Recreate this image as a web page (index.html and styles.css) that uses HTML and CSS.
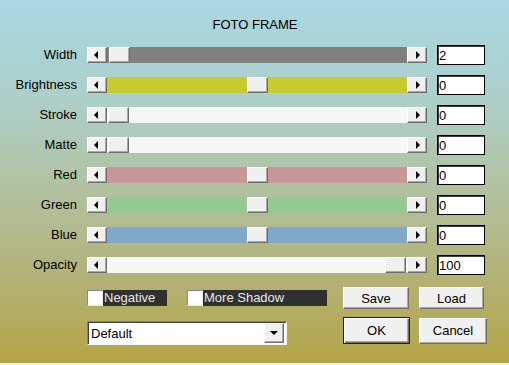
FILE: index.html
```html
<!DOCTYPE html>
<html lang="en">
<head>
    <meta charset="UTF-8">
    <title>Foto Frame</title>
    <link rel="stylesheet" href="styles.css">
</head>
<body>
    <div class="dialog">
        <h1 class="title">FOTO FRAME</h1>

        <div class="rows">
            <span class="label">Width</span>
            <div class="scroll">
                <span class="arrow arrow-left"></span>
                <div class="track track-gray"><span class="thumb" style="margin-left: 2px"></span></div>
                <span class="arrow arrow-right"></span>
            </div>
            <input class="value" type="text" value="2">

            <span class="label">Brightness</span>
            <div class="scroll">
                <span class="arrow arrow-left"></span>
                <div class="track track-yellow"><span class="thumb" style="margin-left: 140px"></span></div>
                <span class="arrow arrow-right"></span>
            </div>
            <input class="value" type="text" value="0">

            <span class="label">Stroke</span>
            <div class="scroll">
                <span class="arrow arrow-left"></span>
                <div class="track track-light"><span class="thumb" style="margin-left: 1px"></span></div>
                <span class="arrow arrow-right"></span>
            </div>
            <input class="value" type="text" value="0">

            <span class="label">Matte</span>
            <div class="scroll">
                <span class="arrow arrow-left"></span>
                <div class="track track-light"><span class="thumb" style="margin-left: 1px"></span></div>
                <span class="arrow arrow-right"></span>
            </div>
            <input class="value" type="text" value="0">

            <span class="label">Red</span>
            <div class="scroll">
                <span class="arrow arrow-left"></span>
                <div class="track track-red"><span class="thumb" style="margin-left: 140px"></span></div>
                <span class="arrow arrow-right"></span>
            </div>
            <input class="value" type="text" value="0">

            <span class="label">Green</span>
            <div class="scroll">
                <span class="arrow arrow-left"></span>
                <div class="track track-green"><span class="thumb" style="margin-left: 140px"></span></div>
                <span class="arrow arrow-right"></span>
            </div>
            <input class="value" type="text" value="0">

            <span class="label">Blue</span>
            <div class="scroll">
                <span class="arrow arrow-left"></span>
                <div class="track track-blue"><span class="thumb" style="margin-left: 140px"></span></div>
                <span class="arrow arrow-right"></span>
            </div>
            <input class="value" type="text" value="0">

            <span class="label">Opacity</span>
            <div class="scroll">
                <span class="arrow arrow-left"></span>
                <div class="track track-light"><span class="thumb" style="margin-left: 278px"></span></div>
                <span class="arrow arrow-right"></span>
            </div>
            <input class="value" type="text" value="100">
        </div>

        <div class="controls">
            <div class="controls-row">
                <label class="check check-negative"><span class="box"></span><span class="check-text">Negative</span></label>
                <label class="check check-shadow"><span class="box"></span><span class="check-text">More Shadow</span></label>
                <button class="btn btn-save" type="button">Save</button>
                <button class="btn btn-load" type="button">Load</button>
            </div>
            <div class="controls-row controls-row-bottom">
                <div class="select">
                    <span class="select-text">Default</span>
                    <span class="select-btn"></span>
                </div>
                <button class="btn btn-ok" type="button">OK</button>
                <button class="btn btn-cancel" type="button">Cancel</button>
            </div>
        </div>
    </div>
</body>
</html>
```

FILE: styles.css
```css
* {
    margin: 0;
    padding: 0;
    box-sizing: border-box;
}
body {
    background-color: #f0f0f0;
    font-family: 'Liberation Sans', Arial, sans-serif;
    font-size: 13px;
    color: #000;
}
.dialog {
    width: 509px;
    height: 365px;
    padding-top: 15px;
    border-bottom: 2px solid #eef0ec;
    background: linear-gradient(#a9d7e3 0%, #adcfc9 28%, #b1c1a0 52%, #b3b277 76%, #b4a546 100%);
}
.title {
    height: 20px;
    line-height: 20px;
    font-size: 13px;
    font-weight: normal;
    text-align: center;
    margin-bottom: 10px;
    padding-left: 1px;
}

/* slider rows */
.rows {
    display: grid;
    grid-template-columns: 77px 340px 48px;
    grid-auto-rows: 20px;
    column-gap: 10px;
    row-gap: 10px;
    align-items: center;
}
.label {
    text-align: right;
    line-height: 16px;
}
.scroll {
    display: flex;
    height: 16px;
}
.arrow,
.thumb {
    position: relative;
    flex: none;
    width: 20px;
    height: 16px;
    background-color: #f0f0f0;
    border-top: 1px solid #ffffff;
    border-left: 1px solid #ffffff;
    border-right: 1px solid #6e6e6e;
    border-bottom: 1px solid #6e6e6e;
    box-shadow: inset -1px -1px 0 #a8a8a8;
}
.thumb {
    width: 21px;
}
.arrow::after {
    content: '';
    position: absolute;
    top: 3px;
    border-top: 4px solid transparent;
    border-bottom: 4px solid transparent;
}
.arrow-left::after {
    left: 6px;
    border-right: 4px solid #000;
}
.arrow-right::after {
    left: 8px;
    border-left: 4px solid #000;
}
.track {
    flex: 1;
    display: flex;
}
.track-gray { background-color: #808080; }
.track-yellow { background-color: #c9c932; }
.track-red { background-color: #c89698; }
.track-green { background-color: #96c896; }
.track-blue { background-color: #80a8c8; }
.track-light {
    background: repeating-conic-gradient(#fdfdfd 0 25%, #f1f1f1 0 50%) 0 0 / 2px 2px;
}
.value {
    width: 48px;
    height: 20px;
    border: 1px solid #000;
    box-shadow: inset 1px 1px 0 #404040;
    background-color: #fff;
    font-family: 'Liberation Sans', Arial, sans-serif;
    font-size: 13px;
    padding: 0 0 0 1px;
    outline: none;
}

/* bottom controls */
.controls {
    padding-left: 87px;
    margin-top: 12px;
}
.controls-row {
    display: flex;
    align-items: center;
    height: 22px;
}
.controls-row-bottom {
    margin-top: 8px;
    height: 27px;
}
.check {
    display: flex;
    align-items: center;
}
.check-negative {
    width: 80px;
    margin-right: 20px;
}
.check-shadow {
    width: 140px;
    margin-right: 16px;
}
.box {
    flex: none;
    width: 16px;
    height: 16px;
    background-color: #fff;
    border-top: 1px solid #8a8a8a;
    border-left: 1px solid #8a8a8a;
    border-right: 1px solid #e8e8e8;
    border-bottom: 1px solid #e8e8e8;
}
.check-text {
    flex: 1;
    height: 16px;
    line-height: 16px;
    background-color: #303030;
    color: #e8e8e8;
    padding-left: 1px;
}
.btn {
    height: 22px;
    background-color: #f0f0f0;
    border-top: 1px solid #ffffff;
    border-left: 1px solid #ffffff;
    border-right: 1px solid #6e6e6e;
    border-bottom: 1px solid #6e6e6e;
    box-shadow: inset -1px -1px 0 #a8a8a8;
    font-family: 'Liberation Sans', Arial, sans-serif;
    font-size: 13px;
    color: #000;
}
.btn-save {
    width: 66px;
    margin-right: 10px;
}
.btn-load {
    width: 65px;
}
.select {
    display: flex;
    align-items: center;
    width: 200px;
    height: 24px;
    margin-top: 5px;
    margin-right: 56px;
    background-color: #fff;
    border-top: 1px solid #808080;
    border-left: 1px solid #808080;
    border-right: 1px solid #f4f4f4;
    border-bottom: 1px solid #f4f4f4;
    box-shadow: inset 1px 1px 0 #404040;
    padding: 1px 2px 1px 3px;
}
.select-text {
    flex: 1;
    padding-top: 1px;
}
.select-btn {
    position: relative;
    width: 20px;
    height: 20px;
    background-color: #f0f0f0;
    border-top: 1px solid #ffffff;
    border-left: 1px solid #ffffff;
    border-right: 1px solid #6e6e6e;
    border-bottom: 1px solid #6e6e6e;
    box-shadow: inset -1px -1px 0 #a8a8a8;
}
.select-btn::after {
    content: '';
    position: absolute;
    left: 5px;
    top: 7px;
    border-left: 4px solid transparent;
    border-right: 4px solid transparent;
    border-top: 4px solid #000;
}
.btn-ok {
    width: 67px;
    height: 27px;
    margin-right: 9px;
    border: 1px solid #202020;
    box-shadow: inset 1px 1px 0 #ffffff, inset -1px -1px 0 #6e6e6e, inset -2px -2px 0 #a8a8a8;
}
.btn-cancel {
    width: 68px;
    height: 26px;
}
```
